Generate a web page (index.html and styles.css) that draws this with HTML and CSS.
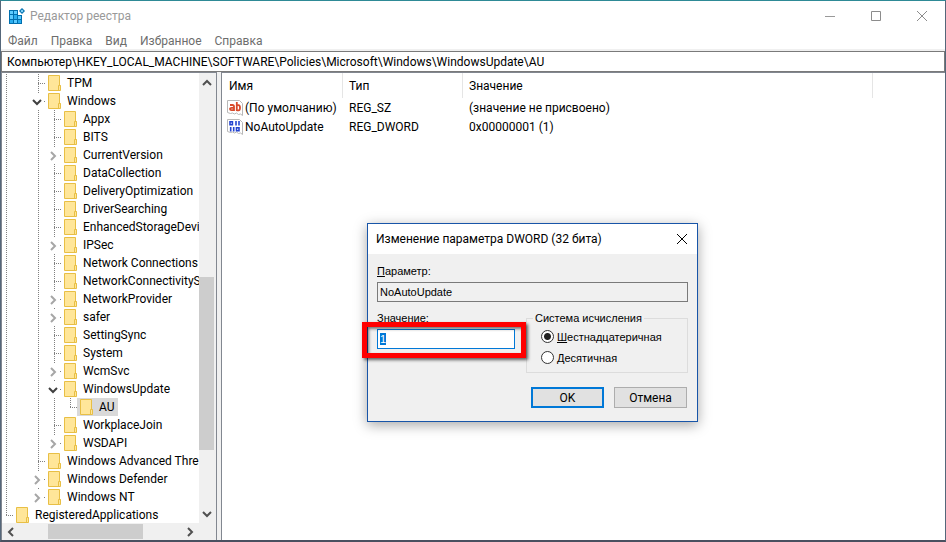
FILE: index.html
```html
<!DOCTYPE html>
<html lang="ru">
<head>
    <meta charset="UTF-8">
    <meta name="viewport" content="width=device-width, initial-scale=1.0">
    <title>Редактор реестра</title>
    <link rel="stylesheet" href="styles.css">
</head>
<body>
    <svg width="0" height="0" class="sprite">
        <symbol id="folder" viewBox="0 0 13 16">
            <path d="M.5.5h11v10h1v5h-12z" fill="#ffe699" stroke="#e8bf45"/>
            <path d="M10.500 15v-4.500h2" fill="none" stroke="#e8bf45"/>
        </symbol>
        <symbol id="right" viewBox="0 0 8 10">
            <path d="M2 1l4 4-4 4" fill="none" stroke="#a6a6a6" stroke-width="2"/>
        </symbol>
        <symbol id="down" viewBox="0 0 10 8">
            <path d="M1 2l4 4 4-4" fill="none" stroke="#404040" stroke-width="2"/>
        </symbol>
    </svg>

    <div class="window">
        <header class="titlebar">
            <svg class="app-icon" width="16" height="16" viewBox="0 0 16 16">
                <path d="M0 2h9v5h4v9H0z" fill="#006fae"/>
                <path d="M1 3h3v3H1zM5 3h3v3H5zM1 7h3v4H1zM9 8h3v3H9zM5 12h3v3H5z" fill="#5ccbff"/>
                <path d="M5 7h3v4H5zM1 12h3v3H1zM9 12h3v3H9z" fill="#2aaef0"/>
                <path d="M13 0l3 3-3 3-3-3z" fill="#006fae"/>
                <path d="M13 1.500L14.500 3 13 4.500 11.500 3z" fill="#8fdcff"/>
            </svg>
            <h1>Редактор реестра</h1>
            <div class="window-buttons">
                <button aria-label="Свернуть"><svg width="12" height="12"><path d="M1 6.500h10" stroke="#999"/></svg></button>
                <button aria-label="Развернуть"><svg width="12" height="12"><path d="M1.500 1.500h9v9h-9z" fill="none" stroke="#8c8c8c"/></svg></button>
                <button aria-label="Закрыть"><svg width="12" height="12"><path d="M1 1l10 10M11 1L1 11" stroke="#8c8c8c"/></svg></button>
            </div>
        </header>

        <nav class="menu">
            <button>Файл</button>
            <button>Правка</button>
            <button>Вид</button>
            <button>Избранное</button>
            <button>Справка</button>
        </nav>

        <input class="address" type="text" aria-label="Адрес" value="Компьютер\HKEY_LOCAL_MACHINE\SOFTWARE\Policies\Microsoft\Windows\WindowsUpdate\AU">

        <main class="panes">
            <section class="tree-pane">
                <div class="tree-view">
                    <ul class="tree">
                        <li>
                            <ul>
                                <li class="last">
                                    <ul>
                                        <li><div class="row"><span class="node"><svg><use href="#folder"/></svg>TPM</span></div></li>
                                        <li><div class="row"><button class="toggle open" aria-label="Свернуть"><svg><use href="#down"/></svg></button><span class="node"><svg><use href="#folder"/></svg>Windows</span></div>
                                            <ul>
                                                <li><div class="row"><span class="node"><svg><use href="#folder"/></svg>Appx</span></div></li>
                                                <li><div class="row"><span class="node"><svg><use href="#folder"/></svg>BITS</span></div></li>
                                                <li><div class="row"><button class="toggle" aria-label="Развернуть"><svg><use href="#right"/></svg></button><span class="node"><svg><use href="#folder"/></svg>CurrentVersion</span></div></li>
                                                <li><div class="row"><span class="node"><svg><use href="#folder"/></svg>DataCollection</span></div></li>
                                                <li><div class="row"><span class="node"><svg><use href="#folder"/></svg>DeliveryOptimization</span></div></li>
                                                <li><div class="row"><span class="node"><svg><use href="#folder"/></svg>DriverSearching</span></div></li>
                                                <li><div class="row"><span class="node"><svg><use href="#folder"/></svg>EnhancedStorageDevi</span></div></li>
                                                <li><div class="row"><button class="toggle" aria-label="Развернуть"><svg><use href="#right"/></svg></button><span class="node"><svg><use href="#folder"/></svg>IPSec</span></div></li>
                                                <li><div class="row"><span class="node"><svg><use href="#folder"/></svg>Network Connections</span></div></li>
                                                <li><div class="row"><span class="node"><svg><use href="#folder"/></svg>NetworkConnectivityS</span></div></li>
                                                <li><div class="row"><button class="toggle" aria-label="Развернуть"><svg><use href="#right"/></svg></button><span class="node"><svg><use href="#folder"/></svg>NetworkProvider</span></div></li>
                                                <li><div class="row"><button class="toggle" aria-label="Развернуть"><svg><use href="#right"/></svg></button><span class="node"><svg><use href="#folder"/></svg>safer</span></div></li>
                                                <li><div class="row"><span class="node"><svg><use href="#folder"/></svg>SettingSync</span></div></li>
                                                <li><div class="row"><span class="node"><svg><use href="#folder"/></svg>System</span></div></li>
                                                <li><div class="row"><button class="toggle" aria-label="Развернуть"><svg><use href="#right"/></svg></button><span class="node"><svg><use href="#folder"/></svg>WcmSvc</span></div></li>
                                                <li><div class="row"><button class="toggle open" aria-label="Свернуть"><svg><use href="#down"/></svg></button><span class="node"><svg><use href="#folder"/></svg>WindowsUpdate</span></div>
                                                    <ul>
                                                        <li class="last"><div class="row"><span class="node selected"><svg><use href="#folder"/></svg>AU</span></div></li>
                                                    </ul>
                                                </li>
                                                <li><div class="row"><span class="node"><svg><use href="#folder"/></svg>WorkplaceJoin</span></div></li>
                                                <li class="last"><div class="row"><button class="toggle" aria-label="Развернуть"><svg><use href="#right"/></svg></button><span class="node"><svg><use href="#folder"/></svg>WSDAPI</span></div></li>
                                            </ul>
                                        </li>
                                        <li><div class="row"><span class="node"><svg><use href="#folder"/></svg>Windows Advanced Thre</span></div></li>
                                        <li><div class="row"><button class="toggle" aria-label="Развернуть"><svg><use href="#right"/></svg></button><span class="node"><svg><use href="#folder"/></svg>Windows Defender</span></div></li>
                                        <li class="last"><div class="row"><button class="toggle" aria-label="Развернуть"><svg><use href="#right"/></svg></button><span class="node"><svg><use href="#folder"/></svg>Windows NT</span></div></li>
                                    </ul>
                                </li>
                            </ul>
                        </li>
                        <li class="last"><div class="row"><span class="node"><svg><use href="#folder"/></svg>RegisteredApplications</span></div></li>
                    </ul>
                </div>
                <div class="scroll vertical">
                    <svg width="10" height="8" viewBox="0 0 10 8"><path d="M1 6l4-4 4 4" fill="none" stroke="#505050" stroke-width="2"/></svg>
                    <div class="track"><div class="thumb"></div></div>
                    <svg width="10" height="8" viewBox="0 0 10 8"><path d="M1 2l4 4 4-4" fill="none" stroke="#505050" stroke-width="2"/></svg>
                </div>
                <div class="scroll horizontal">
                    <svg width="8" height="10" viewBox="0 0 8 10"><path d="M6 1L2 5l4 4" fill="none" stroke="#505050" stroke-width="2"/></svg>
                    <div class="track"><div class="thumb"></div></div>
                    <svg width="8" height="10" viewBox="0 0 8 10"><path d="M2 1l4 4-4 4" fill="none" stroke="#505050" stroke-width="2"/></svg>
                </div>
            </section>

            <section class="values-pane">
                <table class="values">
                    <colgroup>
                        <col class="col-name">
                        <col class="col-type">
                        <col class="col-value">
                        <col>
                    </colgroup>
                    <thead>
                        <tr><th>Имя</th><th>Тип</th><th>Значение</th><td></td></tr>
                    </thead>
                    <tbody>
                        <tr>
                            <td class="name"><svg width="16" height="16" viewBox="0 0 16 16">
                                <path d="M.5.5h12l3 3v12l-2-1.500-2 .5-2-1.500-2 1-2-1-2 .5-3-1z" fill="#fff" stroke="#b8b8b8"/>
                                <path d="M3 5h2.500Q7 5 7 6.500V11M7 7.800H4.500Q3 7.800 3 9t1.500 1.200H7M9.800 2v9M9.800 5.200h1.700Q13 5.200 13 7.800t-1.500 2.500H9.800" fill="none" stroke="#d8492a" stroke-width="1.800"/>
                            </svg>(По умолчанию)</td>
                            <td>REG_SZ</td><td>(значение не присвоено)</td><td></td>
                        </tr>
                        <tr>
                            <td class="name"><svg width="16" height="16" viewBox="0 0 16 16">
                                <path d="M.5.5h12l3 3v12l-2-1.500-2 .5-2-1.500-2 1-2-1-2 .5-3-1z" fill="#fff" stroke="#b8b8b8"/>
                                <path d="M3 2.800h2.400v3H3zM9 2v4.500M12 2v4.500M3.700 8v4.500M6.700 8v4.500M9.500 8.800H12v3H9.500z" fill="none" stroke="#2444d0" stroke-width="1.600"/>
                            </svg>NoAutoUpdate</td>
                            <td>REG_DWORD</td><td>0x00000001 (1)</td><td></td>
                        </tr>
                    </tbody>
                </table>
            </section>
        </main>
    </div>

    <form class="dialog" role="dialog" aria-labelledby="dialog-title" onsubmit="return false">
        <div class="dialog-title">
            <h2 id="dialog-title">Изменение параметра DWORD (32 бита)</h2>
            <button type="button" aria-label="Закрыть"><svg width="12" height="12"><path d="M1 1l10 10M11 1L1 11" stroke="#000"/></svg></button>
        </div>
        <div class="dialog-body">
            <label for="param"><u>П</u>араметр:</label>
            <input id="param" type="text" value="NoAutoUpdate" readonly>
            <div class="fields">
                <div class="value-field">
                    <label for="value"><u>З</u>начение:</label>
                    <div class="marked"><input id="value" type="text" value="1"></div>
                </div>
                <fieldset>
                    <legend>Система исчисления</legend>
                    <label class="radio"><input type="radio" name="base" checked><span><u>Ш</u>естнадцатеричная</span></label>
                    <label class="radio"><input type="radio" name="base"><span><u>Д</u>есятичная</span></label>
                </fieldset>
            </div>
            <div class="actions">
                <button class="default">OK</button>
                <button type="button">Отмена</button>
            </div>
        </div>
    </form>

    <script>
        document.getElementById('value').select();
    </script>
</body>
</html>
```
FILE: styles.css
```css
* {
    box-sizing: border-box;
}
body {
    margin: 0;
    font-family: Roboto, sans-serif;
    font-size: 12px;
    line-height: 18px;
    color: #000;
    background: #33424f;
}
ul {
    list-style: none;
    margin: 0;
    padding: 0;
}
h1, h2 {
    margin: 0;
    font-size: 12px;
    font-weight: normal;
}
button, input {
    font: inherit;
    color: inherit;
}
button {
    padding: 0;
    border: none;
    background: none;
}
svg {
    display: block;
    flex: none;
}
.sprite {
    position: absolute;
}

/* main window */
.window {
    display: flex;
    flex-direction: column;
    height: 100vh;
    background: #fff;
    border: 1px solid #55677a;
    border-top-color: #2e8a96;
    border-bottom: 2px solid #4a5060;
}
.titlebar {
    display: flex;
    align-items: center;
    height: 30px;
    padding-left: 8px;
    color: #999;
}
.titlebar h1 {
    flex: 1;
    margin-left: 5px;
}
.window-buttons {
    display: flex;
}
.window-buttons button {
    display: flex;
    justify-content: center;
    align-items: center;
    width: 46px;
    height: 28px;
}
.menu {
    display: flex;
    gap: 13px;
    height: 20px;
    padding: 1px 0 0 7px;
    color: #6d6d6d;
    border-bottom: 2px solid #f0f0f0;
}
.address {
    height: 21px;
    padding: 0 5px;
    border: 1px solid #7a7a7a;
    outline: none;
}
.panes {
    display: flex;
    flex: 1;
    min-height: 0;
    background: #f0f0f0;
}

/* key tree */
.tree-pane {
    display: grid;
    grid-template: minmax(0, 1fr) 17px / minmax(0, 1fr) 17px;
    width: 216px;
    border: 1px solid #828790;
    border-bottom: none;
    background: #fff;
}
.tree-view {
    overflow: hidden;
}
.tree {
    margin: 1px 0 0 -2px;
}
.tree li {
    padding-left: 16px;
    background:
        repeating-linear-gradient(#808080 0 1px, transparent 1px 2px) 6px 0 / 1px 100% no-repeat,
        repeating-linear-gradient(90deg, #808080 0 1px, transparent 1px 2px) 6px 9px / 8px 1px no-repeat;
}
.tree li.last {
    background-size: 1px 9px, 8px 1px;
}
/* the ancestors above these rows are scrolled out of view */
.tree > li:first-child {
    background-size: 1px 100%, 0 0;
}
.tree > li > ul > li.last {
    background: none;
}
.row {
    display: flex;
    height: 18px;
    white-space: nowrap;
}
.node {
    display: flex;
    align-items: center;
    gap: 6px;
    margin-left: -3px;
    padding: 0 3px;
}
.node svg {
    width: 13px;
    height: 16px;
}
.node.selected {
    background: #d9d9d9;
}
.toggle {
    display: flex;
    justify-content: center;
    align-items: center;
    width: 14px;
    height: 17px;
    margin: 1px 4px 0 -18px;
    background: #fff;
}
.toggle svg {
    width: 8px;
    height: 10px;
}
.toggle.open svg {
    width: 10px;
    height: 8px;
}
.scroll {
    display: flex;
    align-items: center;
    background: #f0f0f0;
}
.scroll .track {
    flex: 1;
}
.scroll .thumb {
    background: #cdcdcd;
}
.vertical {
    flex-direction: column;
    padding: 6px 2px 5px 0;
}
.vertical .track {
    width: 100%;
}
.vertical .thumb {
    height: 41%;
    margin-top: 190px;
}
.horizontal {
    grid-column: 1 / 3;
    padding: 0 22px 0 5px;
}
.horizontal .track {
    height: 15px;
}
.horizontal .thumb {
    width: 95px;
    height: 100%;
    margin-left: 33px;
}

/* value list */
.values-pane {
    flex: 1;
    margin-left: 4px;
    border: 1px solid #828790;
    border-width: 1px 0 0 1px;
    background: #fff;
}
.values {
    width: 100%;
    table-layout: fixed;
    border-spacing: 0;
}
.col-name {
    width: 121px;
}
.col-type {
    width: 120px;
}
.col-value {
    width: 410px;
}
.values th {
    height: 25px;
    padding: 0 6px;
    text-align: left;
    font-weight: normal;
    border-right: 1px solid #e5e5e5;
}
.values th:first-child {
    padding-left: 7px;
}
.values td {
    height: 19px;
    padding: 0 0 0 6px;
    white-space: nowrap;
}
.values td.name {
    display: flex;
    align-items: center;
    gap: 2px;
    padding-left: 5px;
}

/* edit dialog */
.dialog {
    position: absolute;
    top: 223px;
    left: 367px;
    width: 331px;
    border: 1px solid #1855a8;
    background: #f0f0f0;
    box-shadow: 0 3px 12px rgba(0, 0, 0, .35);
}
.dialog-title {
    display: flex;
    align-items: center;
    justify-content: space-between;
    height: 30px;
    padding: 0 9px 0 8px;
    background: #fff;
}
.dialog-body {
    padding: 10px 9px 13px;
    font-family: "Liberation Sans", sans-serif;
    font-size: 11px;
    line-height: 14px;
}
.dialog-body label {
    display: block;
}
.dialog-body input[type="text"] {
    display: block;
    width: 100%;
    height: 20px;
    padding: 0 2px;
    border: 1px solid #7a7a7a;
    background: #fff;
    outline: none;
}
.dialog-body #param {
    margin-top: 4px;
    background: #f0f0f0;
}
.fields {
    display: flex;
    justify-content: space-between;
    margin-top: 9px;
}
.value-field {
    width: 138px;
}
.marked {
    position: relative;
    margin-top: 4px;
}
.marked::after {
    content: "";
    position: absolute;
    inset: -7px -11px -9px -15px;
    border: 5px solid #f00;
    box-shadow: 2px 2px 3px rgba(0, 0, 0, .6), inset 2px 2px 3px rgba(0, 0, 0, .5);
    pointer-events: none;
}
.dialog-body #value {
    border-color: #0078d7;
}
#value::selection {
    background: #0078d7;
    color: #fff;
}
fieldset {
    width: 162px;
    margin: 0;
    padding: 1px 13px 4px 14px;
    border: 1px solid #dcdcdc;
}
legend {
    margin-left: -8px;
    padding: 0 2px;
}
.dialog-body .radio {
    display: flex;
    align-items: center;
    gap: 3px;
    height: 21px;
}
input[type="radio"] {
    appearance: none;
    width: 13px;
    height: 13px;
    margin: 0;
    border: 1px solid #333;
    border-radius: 50%;
    background: #fff;
    flex: none;
}
input[type="radio"]:checked {
    background: radial-gradient(#222 0 3px, #fff 4px);
}
.actions {
    display: flex;
    justify-content: flex-end;
    gap: 10px;
    margin-top: 14px;
    padding-right: 1px;
}
.actions button {
    width: 73px;
    height: 21px;
    font-family: Roboto, sans-serif;
    font-size: 12px;
    border: 1px solid #adadad;
    background: #e1e1e1;
}
.actions .default {
    border: 2px solid #0078d7;
}
```
